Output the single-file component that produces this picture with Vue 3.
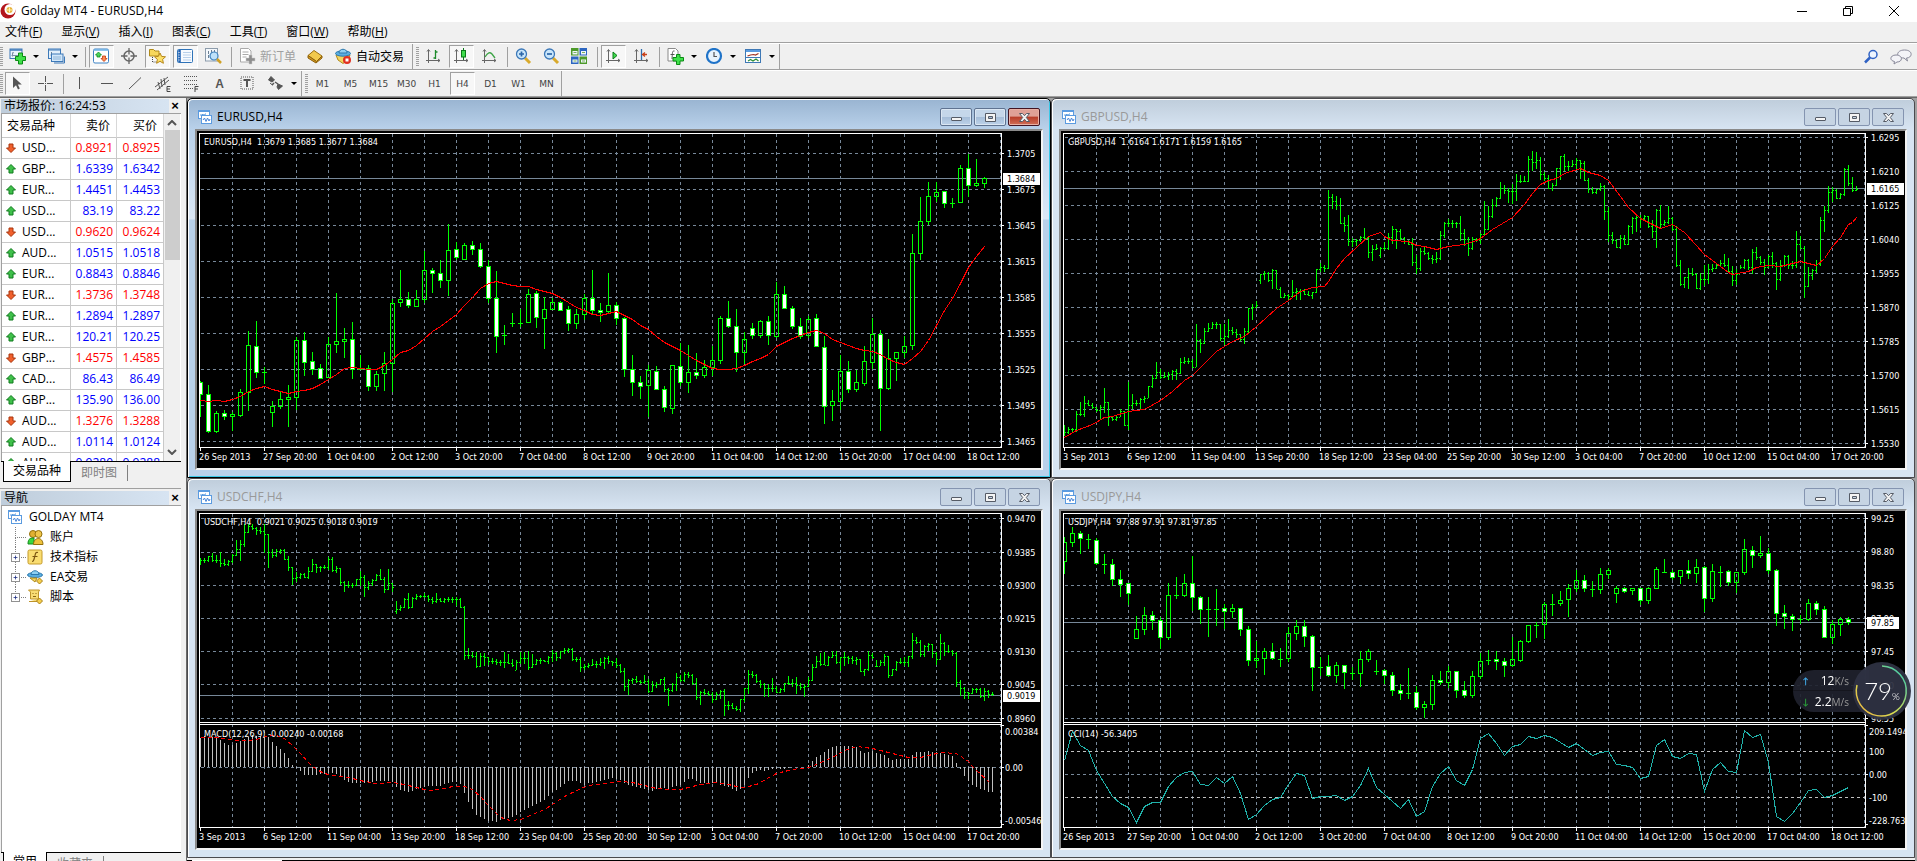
<script setup>
import { ref } from 'vue'

const menus = [
  ['文件', 'F'],
  ['显示', 'V'],
  ['插入', 'I'],
  ['图表', 'C'],
  ['工具', 'T'],
  ['窗口', 'W'],
  ['帮助', 'H']
]

const icons = {
  chartWin:
    '<rect x="1.5" y="1.5" width="11" height="8" fill="#fff" stroke="#5b9be0"/><path d="M1 2h12" stroke="#5b9be0" stroke-width="2"/><path d="M3 6h2l1-1 1 2 1-2h1" fill="none" stroke="#5b9be0"/><rect x="4.500" y="6.500" width="10" height="8" fill="#fff" stroke="#5b9be0"/><path d="M6 11l1.500-2 1.500 3.500 1.500-3.500 1.500 3 1-2" fill="none" stroke="#4a86d8"/>',
  newChart:
    '<rect x="1" y="1" width="12" height="9.500" fill="#eaf4fd" stroke="#3d79b8"/><path d="M1 2h12" stroke="#3d79b8" stroke-width="1.500"/><path d="M3.500 4.500v4M2.500 7.500h7M3 5.500l2-1" stroke="#7b8fa5" fill="none"/><path d="M9.500 5h4v3.500h3v4h-3V16h-4v-3.500h-3v-4h3z" fill="#3fe04a" stroke="#0a8a14"/>',
  windows:
    '<rect x=".5" y="1" width="12" height="9.500" fill="#e3f0fb" stroke="#3d79b8"/><path d="M.5 2h12" stroke="#3d79b8"/><path d="M3.500 4v4M2.500 7h7" stroke="#6f8396"/><rect x="3.500" y="6" width="11.500" height="7.500" fill="#d3e8fa" stroke="#3d79b8"/><path d="M5 9h8M5 11h8" stroke="#8fb4d6"/><path d="M6 15h10.500V8.500" fill="none" stroke="#3d79b8"/>',
  market:
    '<rect x=".5" y="1" width="15" height="14" rx="1.500" fill="#fff" stroke="#3e83c4"/><path d="M1 2h14" stroke="#6bb0e6" stroke-width="1.500"/><path d="M5.500 4l3 3h-1.500v2h-3V7H2.500z" fill="#4bd45a" stroke="#138a24" stroke-width=".8"/><path d="M11 13.500l-3-3h1.500v-2.500h3v2.500H14z" fill="#ff8a50" stroke="#c0390c" stroke-width=".8"/>',
  cross:
    '<circle cx="8" cy="8" r="5" fill="none" stroke="#666" stroke-width="1.500"/><path d="M8 0v6.500M8 9.500V16M0 8h6.500M9.500 8H16" stroke="#666" stroke-width="1.300"/>',
  navStar:
    '<path d="M.5 3V1.500h4l1.500 1.500h4V8H.5z" fill="#f7d75c" stroke="#b08a1a"/><path d="M3.500 9v5h4" fill="none" stroke="#444" stroke-dasharray="1 1"/><path d="M11 5l1.600 3.400 3.900.4-2.900 2.600.8 3.900L11 13.300l-3.400 2 .8-3.900-2.900-2.600 3.900-.4z" fill="#fce06a" stroke="#b5861a"/>',
  terminal:
    '<rect x=".5" y="1.500" width="15" height="13" rx="1" fill="#f8fbff" stroke="#2f73b8"/><path d="M2.500 2v12" stroke="#1e5fb0" stroke-width="2.500"/><path d="M2 4v9" stroke="#fff" stroke-dasharray="1 1.500"/><path d="M6 4.500h8M6 7h8M6 9.500h8M6 12h8" stroke="#b9d0ea"/>',
  tester:
    '<rect x=".5" y=".5" width="12" height="12.500" fill="#f4f8fc" stroke="#8d9cab"/><path d="M3.500 3v8M6.500 2v7M9.500 2v5" stroke="#6c7f92" stroke-dasharray="3 1"/><circle cx="9" cy="8" r="4" fill="#bfe2fa" stroke="#3f82bd" stroke-width="1.200"/><path d="M12 11l4 4" stroke="#d0a126" stroke-width="2.500"/>',
  order:
    '<path d="M1.500.5h8l2.500 2.500v11H1.500z" fill="#fff" stroke="#a9a9a9"/><path d="M3.500 4h6M3.500 6.500h6M3.500 9h4" stroke="#a9a9a9"/><path d="M10 7h3v3h3v3h-3v3h-3v-3H7v-3h3z" fill="#8e8e8e" stroke="#c8c8c8" stroke-width=".5"/>',
  book:
    '<path d="M1 7.500L7 2.500l8 5.500-5.500 5.500z" fill="#f2c94c" stroke="#9c6f10"/><path d="M1 7.500v2.500l8 5 6-5V8l-5.500 5.500z" fill="#d79a1f" stroke="#8b5f0a"/>',
  auto:
    '<path d="M1 7l2 5 5 3.500 5-3.500 2-5z" fill="#f3d45e" stroke="#b08a1c"/><ellipse cx="8" cy="5.500" rx="7.500" ry="2.700" fill="#5aaee0" stroke="#2c78ad"/><path d="M4 5c0-5 8-5 8 0z" fill="#8fd0f2" stroke="#2c78ad"/><circle cx="12" cy="12" r="4" fill="#e03020"/><rect x="10.500" y="10.500" width="3" height="3" fill="#fff"/>',
  bars: '<path d="M3.500 2v13M1 12.500h14M2 3.500l1.500-2 1.500 2M13 11l2 1.500-2 1.500" fill="none" stroke="#666"/><path d="M10.500 2v9M8.500 10h2M10.500 4h2" stroke="#1d8a2a" stroke-width="1.300"/>',
  candles:
    '<path d="M3.500 2v13M1 12.500h14M2 3.500l1.500-2 1.500 2M13 11l2 1.500-2 1.500" fill="none" stroke="#666"/><path d="M10.500 0v12" stroke="#0a7a18"/><rect x="8.500" y="2.500" width="4" height="6.500" fill="#3fdc4c" stroke="#0a7a18"/>',
  line: '<path d="M3.500 2v13M1 12.500h14M2 3.500l1.500-2 1.500 2M13 11l2 1.500-2 1.500" fill="none" stroke="#666"/><path d="M4 9c3-5 5-5 7-3l3 4" fill="none" stroke="#3da446" stroke-width="1.300"/>',
  zoomIn:
    '<path d="M10 10l5 5" stroke="#d9aa2c" stroke-width="3"/><circle cx="6.500" cy="6" r="5" fill="#c9e6fb" stroke="#3c78b8" stroke-width="1.300"/><path d="M6.500 3.500v5M4 6h5" stroke="#2b66a8" stroke-width="1.700"/>',
  zoomOut:
    '<path d="M10 10l5 5" stroke="#d9aa2c" stroke-width="3"/><circle cx="6.500" cy="6" r="5" fill="#c9e6fb" stroke="#3c78b8" stroke-width="1.300"/><path d="M4 6h5" stroke="#2b66a8" stroke-width="1.700"/>',
  tile: '<path d="M0 0h7.500v7.500H0zM8.500 8.500H16V16H8.500z" fill="#4d9a2a"/><path d="M8.500 0H16v7.500H8.500zM0 8.500h7.500V16H0z" fill="#2c66c0"/><path d="M1.500 3h5v3.500h-5zM10 3h5v3.500h-5zM1.500 11.500h5v3h-5zM10 11.500h5v3h-5z" fill="#eef4fb"/><path d="M2.500 4.500h3M11 4.500h3M2.500 13h3M11 13h3" stroke="#7bb05c"/>',
  scroll:
    '<path d="M3.500 2v13M1 12.500h14M2 3.500l1.500-2 1.500 2M13 11l2 1.500-2 1.500" fill="none" stroke="#666"/><path d="M8 4l4 3.500L8 11z" fill="#3fdc4c" stroke="#0a7a18"/>',
  shift:
    '<path d="M3.500 2v13M1 12.500h14M2 3.500l1.500-2 1.500 2M13 11l2 1.500-2 1.500" fill="none" stroke="#666"/><path d="M8.500 1v11" stroke="#2c6cae" stroke-width="1.300"/><path d="M14 6.500H9.500M12 4.500l-2.500 2 2.500 2" fill="none" stroke="#c8401a" stroke-width="1.300"/>',
  indicator:
    '<path d="M1 .5h7.500l2.500 2.500v10H1z" fill="#fff" stroke="#8a8a8a"/><path d="M7.500 3C5 2.500 5.500 5 5 11M3.500 6.500h4" fill="none" stroke="#555"/><path d="M9.500 6.500h3.500v3h3.500v3.500H13v3.500H9.500V13H6V9.500h3.500z" fill="#3fe04a" stroke="#0a8a14"/>',
  clock:
    '<circle cx="8" cy="8" r="7" fill="#e8f3fd" stroke="#1f73c8" stroke-width="2.200"/><path d="M8 4v4.500h3" fill="none" stroke="#555" stroke-width="1.200"/>',
  template:
    '<rect x=".5" y="1.500" width="15" height="13" fill="#fff" stroke="#3e78b5"/><path d="M1 3h14" stroke="#5a9be0" stroke-width="2"/><path d="M2.500 8l3-1 3-.5 2 .5 3-1.500" fill="none" stroke="#a03020" stroke-width="1.200"/><path d="M1 9.500h14" stroke="#3e78b5"/><path d="M3 13l2.500-1.500L8 13l3-2 2.500 2" fill="none" stroke="#2f8f38" stroke-width="1.200"/>',
  cursor: '<path d="M4 1.500v11.500l3-2.800 2 4.300 1.800-.9-2-4.200h4z" fill="#555"/>',
  crosshair: '<path d="M8.500 1v6M8.500 10v6M1 8.500h6M10 8.500h6M8 8.500h1" stroke="#555"/>',
  vline: '<path d="M8.500 2v12" stroke="#555"/>',
  hline: '<path d="M2 8.500h12" stroke="#555"/>',
  trend: '<path d="M2 14L14 2.500" stroke="#555"/>',
  channel:
    '<path d="M0 12L13 2M2 15L14 5M3 7l2 7M6 4l1 8M9 3l1 7" stroke="#555" fill="none"/><path d="M15.500 11.500H12v5h3.500M12 14h3" fill="none" stroke="#444"/>',
  fibo: '<path d="M1 1.500h14M1 5.500h14M1 9.500h14M1 13.500h9" stroke="#555" stroke-dasharray="1 1"/><path d="M15.500 11.500H12V17M12 14h3" fill="none" stroke="#444"/>',
  label: '<rect x="2" y="2" width="12" height="12" fill="none" stroke="#555" stroke-dasharray="1 1"/><path d="M4.500 5h7M8 5v7" stroke="#555" stroke-width="2"/>',
  arrows:
    '<path d="M4 1.500L7.500 5 5 7 1.500 5zM3 8l2.500 2M11 9l4.500 2-4 3.500-1.500-2.500z" fill="#555" stroke="#555"/><path d="M5 10l2-2M8 7l3 2" stroke="#555" stroke-width="1.500"/>',
  account:
    '<circle cx="6" cy="5" r="3.500" fill="#e0b032" stroke="#94700c"/><circle cx="11.500" cy="5" r="3.500" fill="#f0c64a" stroke="#94700c"/><path d="M1 15c0-6 3-6 6-6v6z" fill="#39d83e" stroke="#168a1e"/><path d="M6.500 15.500c0-8 9.500-8 9.500 0z" fill="#eec23c" stroke="#94700c"/>',
  func: '<rect x="1" y="1" width="14" height="14" rx="1.500" fill="#f9dd72" stroke="#c49a2a"/><path d="M11 3.500c-3-1-2.500 2-3.500 5s-.5 4-2.500 4M5.500 7.500h5" fill="none" stroke="#7a5410" stroke-width="1.200"/>',
  ea: '<ellipse cx="8" cy="6" rx="7.500" ry="2.500" fill="#5aaee0" stroke="#2c78ad"/><path d="M4 5.500c0-5 8-5 8 0z" fill="#8fd0f2" stroke="#2c78ad"/><path d="M3 9h7l-2 4z" fill="#f3d45e" stroke="#b08a1c"/><path d="M12.500 9l3 3-3 3-3-3z" fill="#f6cf4b" stroke="#a8801a"/>',
  script:
    '<path d="M1.500 1h11l-1 2v7H3.500V3zM2 12.500h8l1-2.500" fill="#f8dc74" stroke="#bd932a"/><path d="M5.500 4.500h1M8.500 4.500h1M6 7.500h3" stroke="#8a6512"/><path d="M12.500 9l3 3-3 3-3-3z" fill="#f6cf4b" stroke="#a8801a"/>'
}

const mainTools = [
  { icon: 'newChart', menu: true },
  { icon: 'windows', menu: true },
  { sep: true },
  { icon: 'market', on: true },
  { icon: 'cross' },
  { icon: 'navStar', on: true },
  { icon: 'terminal', on: true },
  { icon: 'tester' },
  { sep: true },
  { icon: 'order', text: '新订单', off: true },
  { icon: 'book' },
  { icon: 'auto', text: '自动交易' }
]

const chartTools = [
  { icon: 'bars' },
  { icon: 'candles', on: true },
  { icon: 'line' },
  { sep: true },
  { icon: 'zoomIn' },
  { icon: 'zoomOut' },
  { icon: 'tile' },
  { sep: true },
  { icon: 'scroll', on: true },
  { icon: 'shift' },
  { sep: true },
  { icon: 'indicator', menu: true },
  { icon: 'clock', menu: true },
  { icon: 'template', menu: true }
]

const drawTools = [
  { icon: 'cursor', on: true },
  { icon: 'crosshair' },
  { sep: true },
  { icon: 'vline' },
  { icon: 'hline' },
  { icon: 'trend' },
  { icon: 'channel' },
  { icon: 'fibo' },
  { letter: 'A' },
  { icon: 'label' },
  { icon: 'arrows', menu: true }
]

const periods = ['M1', 'M5', 'M15', 'M30', 'H1', 'H4', 'D1', 'W1', 'MN']
const period = ref('H4')

const quotes = [
  ['USD...', '0.8921', '0.8925', 'down'],
  ['GBP...', '1.6339', '1.6342', 'up'],
  ['EUR...', '1.4451', '1.4453', 'up'],
  ['USD...', '83.19', '83.22', 'up'],
  ['USD...', '0.9620', '0.9624', 'down'],
  ['AUD...', '1.0515', '1.0518', 'up'],
  ['EUR...', '0.8843', '0.8846', 'up'],
  ['EUR...', '1.3736', '1.3748', 'down'],
  ['EUR...', '1.2894', '1.2897', 'up'],
  ['EUR...', '120.21', '120.25', 'up'],
  ['GBP...', '1.4575', '1.4585', 'down'],
  ['CAD...', '86.43', '86.49', 'up'],
  ['GBP...', '135.90', '136.00', 'up'],
  ['AUD...', '1.3276', '1.3288', 'down'],
  ['AUD...', '1.0114', '1.0124', 'up'],
  ['AUD...', '0.9280', '0.9288', 'up']
]

const tree = [
  { icon: 'account', text: '账户' },
  { icon: 'func', text: '技术指标', open: true },
  { icon: 'ea', text: 'EA交易', open: true },
  { icon: 'script', text: '脚本', open: true }
]

// Vertical values are stored in thirds of a pixel
const TOP = 117
const row = (v) => Math.round((v - TOP - 1.5) / 3)
const edge = (v) => Math.round((v - TOP) / 3)
const parse = (s) => s.trim().split(/\s*,\s*/).map((p) => p.split(' '))

// high, body top, body bottom, low, f = falling / h = rising / d = doji
function candlePaths(src) {
  let wick = ''
  let hollow = ''
  let solid = ''
  parse(src).forEach(([hi, top, bot, lo, kind], i) => {
    const x = i * 8
    const t = row(top)
    const b = Math.max(row(bot), t)
    if (kind === 'd') {
      wick += `M${x + 0.5} ${edge(hi)}V${edge(lo)}M${x - 2} ${b + 0.5}h5`
      return
    }
    wick += `M${x + 0.5} ${edge(hi)}V${t}M${x + 0.5} ${b + 1}V${Math.max(edge(lo), b + 1)}`
    const box = `M${x - 1.5} ${t + 0.5}h4V${b + 0.5}h-4z`
    if (kind === 'f') solid += box
    else hollow += box
  })
  return { wick: wick + hollow, solid }
}

// high, low, close and, after a gap, open
function barPaths(src) {
  let wick = ''
  let last = null
  parse(src).forEach(([hi, lo, close, open], i) => {
    const x = i * 4
    const o = row(open || last || close)
    wick += `M${x + 0.5} ${edge(hi)}V${edge(lo)}M${x - 1} ${o + 0.5}h1M${x + 1} ${row(close) + 0.5}h1`
    last = close
  })
  return { wick, solid: '' }
}

const poly = (src, step) =>
  parse(src)
    .map(([i, y]) => `${i * step + 0.5},${row(y) + 0.5}`)
    .join(' ')
const polyAll = (src, step) =>
  src
    .trim()
    .split(' ')
    .map((y, i) => `${i * step + 0.5},${row(y) + 0.5}`)
    .join(' ')

function histogram(src, zero) {
  const pts = parse(src).map((p) => p.map(Number))
  let d = ''
  for (let k = 0; k < pts.length; k++) {
    const [i0, y0] = pts[k]
    const [i1, y1] = pts[k + 1] || [i0 + 1, y0]
    for (let i = i0; i < i1; i++) {
      const y = y0 + ((y1 - y0) * (i - i0)) / (i1 - i0)
      d += `M${i * 4 + 0.5} ${row(zero)}V${row(y)}`
    }
  }
  return d
}

const eurusd = `857 862 898 965 f,870 898 1010 1013 f,948 955 1010 1013 h,945 955 964 974 f,950 958 965 1008 h,882 892 962 965 h,708 751 892 948 h,678 754 832 849 f,816 831 832 866 d,919 934 953 996 h,
888 912 935 941 h,870 907 913 996 h,726 736 907 946 h,711 736 802 843 f,771 799 823 840 f,808 820 849 851 f,726 748 848 850 h,594 739 748 773 h,699 733 739 790 h,681 733 822 851 f,
780 820 823 826 d,811 820 874 887 f,828 838 874 887 h,771 805 835 887 h,612 625 805 891 h,525 613 622 635 h,591 613 631 638 f,585 613 634 636 h,468 526 613 625 h,519 526 535 594 f,
495 535 556 578 f,387 466 556 603 h,441 463 487 496 f,444 451 493 495 h,438 451 463 480 f,444 463 514 519 f,495 514 610 625 f,528 610 724 774 f,690 720 722 750 d,654 682 685 696 d,
642 682 685 696 d,583 598 682 684 h,588 595 667 699 f,607 643 670 762 h,610 622 643 645 h,619 622 646 648 f,633 643 685 708 f,642 658 685 702 h,598 610 658 675 h,525 610 646 657 f,
625 646 652 681 f,534 631 649 658 h,622 631 670 690 f,665 670 823 845 f,780 823 862 903 f,843 862 874 912 f,810 826 871 966 h,813 829 883 886 f,873 883 937 951 f,810 811 940 957 h,
744 814 862 873 f,750 832 862 894 h,774 832 841 852 f,795 817 841 849 h,753 796 817 843 h,663 670 796 807 h,618 670 694 699 f,642 694 772 831 f,711 733 772 807 h,684 700 721 731 f,
675 679 721 728 h,663 679 721 750 f,561 598 724 728 h,573 598 640 641 f,633 640 694 701 f,670 694 724 731 f,663 673 721 728 h,657 670 754 756 f,723 757 934 987 f,885 919 931 978 h,
780 829 919 945 h,798 829 883 893 f,825 862 883 891 h,754 799 865 872 h,669 718 802 822 h,706 718 880 1008 f,732 790 880 884 h,771 772 790 858 h,723 754 772 788 h,417 475 751 765 h,
306 379 475 495 h,261 304 379 390 h,261 292 304 321 h,288 289 325 339 f,309 322 325 339 d,210 220 322 324 h,177 220 271 306 f,192 265 271 275 h,246 251 265 279 h`

const eurusdMa =
  '916 918 916 919 912 905 888 880 875 883 888 895 889 885 880 868 854 838 821 817 821 823 823 812 793 773 765 750 730 709 693 676 658 631 606 580 566 559 565 571 574 574 583 589 595 607 622 636 646 658 661 655 648 660 673 690 703 723 742 754 766 781 795 808 820 823 823 820 811 800 790 778 753 742 730 721 711 706 715 733 742 751 760 765 769 778 793 802 807 791 769 736 691 646 609 565 518 484 454'

const gbpusd = `990 1023 1013,997 1017 1003,998 1010 1003,948 1010 958,921 963 958,903 966 925,915 933 931,924 942 938,935 950 945,930 971 937,879 954 922,922 992 966,963 978 973,960 978 966,942 966 948,
948 992 990,861 1004 930,897 943 925,915 932 925,908 944 912,903 924 910,873 910 875,840 880 850,801 853 832,822 852 846,831 850 845,831 856 837,825 855 829,822 856 836,788 838 802,
786 806 799,790 806 799,792 819 816,687 816 737,733 773 744,699 748 709,684 712 699,681 703 688,681 703 688,688 738 731,687 750 724,672 729 706,696 720 712,702 728 718,717 738 732,
700 748 709,640 718 640,627 675 637,618 640 631,538 566 538 557,528 556 534,532 560 556,522 581 526,525 583 583,577 608 606,595 608 601,597 614 605,555 608 592,580 616 588,583 614 588,
583 599 598,588 604 600,592 611 592,522 593 522,504 532 516,510 530 520,285 522 306,297 342 318,303 345 330,309 388 385,366 411 391,360 452 439,430 456 440,432 454 436,424 440 427,
399 434 430,426 490 472,450 497 463,448 466 460,456 490 459 482,442 465 460,414 465 427,393 447 403,402 462 409,402 434 430,427 446 438,434 450 448,430 512 502,480 536 520,460 527 470,
456 480 476,472 496 490,480 506 493,472 503 490,408 494 420,382 428 385,372 396 385,376 398 384,380 400 385,363 437 415,402 454 432,427 482 460,427 464 433,430 440 436,414 446 418,
318 424 403,333 406 364,312 370 331,305 335 309,261 313 279,270 297 285,279 324 288,267 327 288,237 319 259,240 265 259,243 262 259,183 261 192,168 227 202,171 223 197,185 255 238,
231 258 249,240 282 279,264 288 270,218 273 221,183 255 183,177 229 215,199 229 213,195 217 208,189 225 197,195 252 205,199 259 255,249 295 282,277 297 293,282 297 283,264 289 274,
271 375 348,336 441 421,411 447 436,432 459 457,420 462 430,421 451 448,390 451 395,366 417 369,360 411 367,360 399 370,360 375 365,363 399 394,375 429 409,343 459 346,330 403 388,
375 393 382,333 387 370,366 409 403,393 517 511,495 573 568,546 579 547,519 582 535,519 543 538,535 583 580,534 585 553,510 573 553,507 567 523,507 532 519,504 523 511,496 513 504,
477 517 511,489 532 528,513 573 556,522 571 537,510 523 517,493 523 495,493 525 517,462 537 472,456 495 486,483 509 502,492 539 517,481 519 484,471 519 505,502 585 553,495 559 511,
480 517 484,481 521 511,499 521 511,408 519 447,423 462 459,453 609 573,516 575 541,522 555 526,495 535 507,366 513 375,333 411 346,273 355 291,276 321 286,283 313 309,295 311 298,
220 303 222,210 273 265,246 291 285,273 289 283`

const gbpusdMa = `0 1027,3 1006,7 989,10 968,12 964,16 948,20 943,24 917,27 889,30 857,32 841,35 804,38 770,42 739,45 724,48 693,53 640,56 616,59 589,62 578,65 574,66 558,68 520,70 489,73 457,76 424,79 411,80 424,82 436,86 439,
88 451,90 455,93 463,96 454,100 448,103 436,104 431,107 403,112 367,115 328,117 295,119 268,121 256,123 250,125 235,129 220,131 231,134 241,136 255,139 304,141 337,144 371,149 400,152 387,155 412,158 452,160 478,163 504,
166 533,167 538,171 529,173 517,176 511,179 514,184 499,188 511,190 489,192 454,194 426,196 388,197 381,198 367`

const usdchf = `250 270 256,250 265 255,244 260 244,234 262 256,240 264 256,232 276 264,252 272 268,255 272 260,238 265 241,195 244 222,195 258 208,148 215 172,148 174 154,148 165 160,155 180 165,
156 178 170,148 234 178,178 279 232,222 250 240,222 246 230,222 238 226,222 255 253,243 288 276,276 330 310,292 320 306,294 312 298,294 310 306,276 312 290,252 292 268,266 294 276,
272 290 276,270 282 278,246 284 252,246 292 286,273 294 281,279 330 322,318 350 330,318 340 332,324 340 331,312 334 313,288 334 306,300 366 338,318 346 326,312 334 316,297 318 300,
282 316 314,306 354 342,282 344 325,324 350 338,378 416 402 408,390 408 398,370 400 373,354 402 397,366 400 370,357 374 365,360 370 364,354 370 363,360 382 374,366 388 379,354 385 374,
370 382 378,370 385 374,366 380 373,366 384 374,366 392 374,369 400 396,393 555 542,520 552 542,531 550 544,532 578 573,534 576 544,534 574 548,546 570 560,549 566 560,552 570 562,
555 572 562,531 580 563,536 568 564,552 576 572,554 586 561 585,531 568 549,531 566 549,528 584 576,537 580 567,552 570 555,549 566 557,554 562 558,543 566 546,525 562 534,530 557 546,
528 552 529,520 536 525,519 534 523,520 558 552,546 562 552,546 591 576,567 585 573,564 580 570,552 574 567,558 578 567,549 573 562,545 582 549,543 567 560,558 574 563,550 578 572,
567 594 590,580 648 634,612 660 616,609 626 614,603 624 620,616 628 622,600 626 620,612 654 650,618 652 630,622 638 628,612 630 614,606 652 643,640 693 646,624 652 628,594 648 608,
600 622 616,592 620 598,591 608 602,597 630 624,609 675 668,648 690 652,642 660 654,648 663 657,652 684 673,651 675 658,645 672 650,642 723 690,679 706 691,684 702 700,694 708 703,
673 711 673,640 680 640,585 656 598,588 608 601,597 624 620,615 638 627,625 666 640,628 666 640,609 650 640,634 654 651,640 654 643,624 650 625,603 630 625,612 636 626,606 656 631,
624 645 636,628 666 634,606 636 616,567 618 577,543 580 559,534 574 568,531 570 570,543 573 546,528 550 540,528 566 562,545 588 548,531 573 548,543 567 549,543 567 556,546 570 553,
552 591 588,582 603 583,528 588 541,534 553 548,555 576 573 573,555 573 562,538 573 544,543 608 601,583 604 583,558 588 562,549 568 562,546 573 562,543 576 544,474 552 496,486 506 502,
495 546 538,510 545 513,505 528 508,507 550 534,530 570 552,477 556 505,501 544 528,510 534 528,525 544 534,531 636 622,615 664 640,636 672 652,652 672 655,640 658 643,640 654 643,
640 670 664,639 678 650,646 670 658,652 664 658`

const macd = `0 790,1 785,4 790,5 797,6 805,7 810,8 810,9 804,10 800,11 793,12 788,13 782,16 785,17 787,18 802,19 814,20 823,21 834,22 850,23 871,24 880,25 890,26 900,27 902,29 902,30 899,33 895,34 897,35 905,36 915,37 921,38 926,
42 926,44 918,47 918,48 922,49 936,50 945,52 953,53 948,55 939,56 936,60 934,62 925,64 922,65 928,66 955,67 983,68 1002,69 1020,70 1028,72 1040,74 1041,76 1033,78 1027,79 1020,80 1012,82 1000,83 995,85 982,86 975,88 953,
90 938,92 920,94 920,95 924,96 932,97 926,99 923,101 915,103 911,105 917,106 926,108 935,110 940,113 948,115 940,117 942,119 935,120 930,122 912,123 912,125 924,127 927,129 926,131 934,133 942,134 948,135 942,136 930,
137 911,138 896,139 888,140 885,141 888,142 885,144 883,146 884,148 878,151 878,152 872,153 860,154 846,155 840,157 824,158 817,160 813,162 813,164 817,165 829,166 834,168 830,170 839,171 840,172 849,173 855,177 853,
178 840,179 831,181 831,182 828,183 831,185 835,188 843,189 865,190 884,191 905,192 920,193 930,195 944,197 951,198 953`

const macdSignal = `0 787,3 786,6 790,9 795,12 797,14 792,17 782,19 782,21 790,23 810,25 835,27 862,29 882,31 895,33 900,37 906,39 912,41 918,44 925,48 922,51 929,54 938,57 946,60 943,63 933,66 934,68 943,70 965,72 990,74 1015,
76 1032,78 1036,80 1034,83 1018,86 1002,88 987,91 965,94 945,97 931,101 924,105 919,108 922,111 931,114 940,118 942,120 943,124 930,128 922,131 926,134 935,136 936,139 929,144 895,148 884,152 878,157 853,161 825,164 815,
168 820,173 835,177 847,180 847,185 833,189 836,192 860,193 875,198 930`

const usdjpy = `185 203 260 297 h,156 175 203 216 h,168 175 191 237 f,177 190 193 222 d,190 196 266 270 f,238 265 268 297 d,252 268 314 333 f,285 313 329 366 f,324 325 355 390 f,424 463 490 491 h,
396 421 463 480 h,409 421 436 465 f,426 436 487 522 f,324 361 487 494 h,306 360 362 372 d,297 325 361 366 h,244 325 367 408 f,363 367 403 447 f,366 402 404 486 d,342 400 403 453 d,
387 400 409 462 f,387 400 409 429 h,399 400 463 483 f,454 463 556 573 f,498 550 556 579 h,519 529 550 600 h,504 529 550 556 f,519 549 553 576 d,456 475 550 560 h,435 454 475 495 h,
435 454 484 516 f,480 484 577 648 f,546 574 577 603 d,540 574 601 606 f,561 571 601 624 h,570 571 592 642 f,576 592 595 615 d,528 553 596 636 h,521 529 553 561 h,555 586 589 600 d,
582 586 601 627 f,591 601 646 663 f,627 646 655 675 f,579 652 655 672 d,633 652 697 704 f,678 688 697 729 h,600 616 688 705 h,588 616 622 630 f,573 589 622 639 h,588 589 646 669 f,
618 646 661 668 f,588 604 661 669 h,533 559 604 612 h,525 553 556 571 d,528 553 559 585 f,549 559 571 606 f,486 553 571 576 h,495 499 556 560 h,450 451 499 503 h,441 448 451 489 d,
381 388 448 492 h,357 385 388 423 d,348 376 385 393 h,327 340 373 426 h,285 316 340 350 h,300 316 340 350 f,318 340 343 366 d,279 298 343 357 h,279 286 298 312 h,333 340 355 384 h,
337 340 349 354 f,339 340 346 360 h,339 340 376 390 f,336 340 376 387 h,276 283 340 342 h,252 289 292 294 d,286 292 307 315 f,285 286 304 327 h,255 286 295 312 f,252 277 295 324 h,
274 277 370 411 f,267 289 370 381 h,273 289 291 336 d,285 289 322 333 f,291 292 322 354 h,192 223 292 300 h,212 226 241 279 f,183 235 241 250 h,219 235 286 297 f,282 286 415 453 f,
390 415 424 462 f,417 424 433 468 f,421 431 434 447 d,373 385 433 438 h,379 385 403 420 f,394 403 487 489 f,435 448 487 507 h,426 433 448 483 h,426 433 442 450 f`

const cci =
  '855 770 811 826 887 925 963 985 996 1042 993 982 982 935 907 892 889 927 931 907 924 905 955 1032 1019 992 973 967 928 895 902 969 964 964 960 975 963 930 880 937 957 980 1000 974 1023 1010 933 895 875 916 931 882 790 775 804 841 814 807 783 790 781 787 802 817 804 824 841 832 829 867 871 877 911 903 812 793 844 850 835 838 949 884 862 888 892 766 787 778 862 1025 1039 1014 982 946 943 967 961 948 936'

const octDates = ['26 Sep 2013', '27 Sep 20:00', '1 Oct 04:00', '2 Oct 12:00', '3 Oct 20:00', '7 Oct 04:00', '8 Oct 12:00', '9 Oct 20:00', '11 Oct 04:00', '14 Oct 12:00', '15 Oct 20:00', '17 Oct 04:00', '18 Oct 12:00']
const sepDates = ['3 Sep 2013', '6 Sep 12:00', '11 Sep 04:00', '13 Sep 20:00', '18 Sep 12:00', '23 Sep 04:00', '25 Sep 20:00', '30 Sep 12:00', '3 Oct 04:00', '7 Oct 20:00', '10 Oct 12:00', '15 Oct 04:00', '17 Oct 20:00']

const scale = (labels, rows) => labels.map((text, i) => ({ text, y: row(rows[i]) }))

const charts = [
  {
    title: 'EURUSD,H4',
    active: true,
    info: 'EURUSD,H4  1.3679 1.3685 1.3677 1.3684',
    ...candlePaths(eurusd),
    ma: polyAll(eurusdMa, 8),
    dates: octDates,
    last: { text: '1.3684', y: row(250), width: 36 },
    scale: scale(
      ['1.3705', '1.3675', '1.3645', '1.3615', '1.3585', '1.3555', '1.3525', '1.3495', '1.3465'],
      [175, 283, 391, 499, 607, 715, 823, 931, 1039]
    )
  },
  {
    title: 'GBPUSD,H4',
    info: 'GBPUSD,H4  1.6164 1.6171 1.6159 1.6165',
    ...barPaths(gbpusd),
    ma: poly(gbpusdMa, 4),
    dates: sepDates,
    last: { text: '1.6165', y: row(281), width: 36 },
    scale: scale(
      ['1.6295', '1.6210', '1.6125', '1.6040', '1.5955', '1.5870', '1.5785', '1.5700', '1.5615', '1.5530'],
      [128, 230, 332, 434, 536, 637, 739, 841, 943, 1045]
    )
  },
  {
    title: 'USDCHF,H4',
    info: 'USDCHF,H4  0.9021 0.9025 0.9018 0.9019',
    ...barPaths(usdchf),
    dates: sepDates,
    last: { text: '0.9019', y: row(661), width: 36 },
    scale: scale(
      ['0.9470', '0.9385', '0.9300', '0.9215', '0.9130', '0.9045', '0.8960'],
      [130, 232, 331, 430, 529, 628, 730]
    ),
    sub: {
      info: 'MACD(12,26,9) -0.00240 -0.00168',
      hist: histogram(macd, 877),
      signal: poly(macdSignal, 4),
      zero: row(877),
      levels: [],
      scale: scale(['0.00384', '0.00', '-0.00546'], [769, 877, 1036])
    }
  },
  {
    title: 'USDJPY,H4',
    info: 'USDJPY,H4  97.88 97.91 97.81 97.85',
    ...candlePaths(usdjpy),
    dates: octDates,
    last: { text: '97.85', y: row(442), width: 31 },
    scale: scale(
      ['99.25', '98.80', '98.35', '97.90', '97.45', '97.00', '96.55'],
      [130, 230, 331, 430, 529, 631, 730]
    ),
    sub: {
      info: 'CCI(14) -56.3405',
      line: polyAll(cci, 8),
      zero: row(898),
      levels: [row(829), row(967)],
      scale: scale(['209.1494', '100', '0.00', '-100', '-228.7632'], [769, 829, 898, 967, 1036])
    }
  }
]
</script>

<template>
  <div class="app">
    <header class="titlebar">
      <svg class="logo" viewBox="0 0 16 16">
        <circle cx="8" cy="8" r="7.500" fill="#b3161c" />
        <circle cx="10" cy="6.500" r="5.500" fill="#fff" />
        <circle cx="9.500" cy="7" r="3" fill="#e8b23a" />
        <path d="M7 7h5M9.500 4.500v5" stroke="#fff3b0" />
      </svg>
      <h1>Golday MT4 - EURUSD,H4</h1>
      <button class="sys" aria-label="Minimize"><svg viewBox="0 0 10 10"><path d="M0 5.500h10" /></svg></button>
      <button class="sys" aria-label="Restore">
        <svg viewBox="0 0 10 10"><path d="M.5 2.500h7v7h-7zM2.500 2.500v-2h7v7h-2" /></svg>
      </button>
      <button class="sys" aria-label="Close"><svg viewBox="0 0 10 10"><path d="M0 0l10 10M10 0L0 10" /></svg></button>
    </header>

    <nav class="menubar">
      <button v-for="[name, key] in menus" :key="key">{{ name }}(<u>{{ key }}</u>)</button>
    </nav>

    <div class="toolrow">
      <div v-for="(group, g) in [mainTools, chartTools]" :key="g" class="toolbar">
        <i class="grip"></i>
        <template v-for="(t, i) in group" :key="i">
          <i v-if="t.sep" class="sep"></i>
          <button v-else :class="['tool', { on: t.on, off: t.off, wide: t.text }]" :disabled="t.off" :aria-label="t.icon">
            <span class="face"><svg viewBox="0 0 17 17" v-html="icons[t.icon]"></svg></span>
            <span v-if="t.text" class="caption">{{ t.text }}</span>
          </button>
          <button v-if="t.menu" class="drop" aria-label="more"></button>
        </template>
      </div>
      <div class="extras">
        <button aria-label="Search">
          <svg viewBox="0 0 22 16" width="22" height="16">
            <circle cx="13" cy="5.500" r="4" fill="#eef5ff" stroke="#2f62c4" stroke-width="1.500" />
            <path d="M10 8.500l-5 5" stroke="#2f62c4" stroke-width="2.500" />
          </svg>
        </button>
        <button aria-label="Chat">
          <svg viewBox="0 0 22 16" width="22" height="16">
            <path d="M14.500 1c9 0 8 8 2 8l1 3-3.500-3C5 9 6 1 14.500 1z" fill="#f4f4f8" stroke="#889" />
            <path d="M6 6c7 0 7 7 1 7l-3 2 .5-2.500C-1 11.500 0 6 6 6z" fill="#f4f4f8" stroke="#889" />
          </svg>
        </button>
      </div>
    </div>

    <div class="toolrow">
      <div class="toolbar">
        <i class="grip"></i>
        <template v-for="(t, i) in drawTools" :key="i">
          <i v-if="t.sep" class="sep"></i>
          <button v-else :class="['tool', { on: t.on }]" :aria-label="t.icon || t.letter">
            <span class="face">
              <svg v-if="t.icon" viewBox="0 0 17 17" v-html="icons[t.icon]"></svg>
              <b v-else>{{ t.letter }}</b>
            </span>
          </button>
          <button v-if="t.menu" class="drop" aria-label="more"></button>
        </template>
      </div>
      <div class="toolbar">
        <i class="grip"></i>
        <button v-for="p in periods" :key="p" :class="['tool', { on: p === period }]" @click="period = p">
          <span class="face period">{{ p }}</span>
        </button>
      </div>
    </div>

    <main class="body">
      <aside class="side">
        <section class="panel quotes">
          <div class="panel-head">
            <h2>市场报价: 16:24:53</h2>
            <button aria-label="Close">×</button>
          </div>
          <div class="panel-body">
            <table>
              <thead>
                <tr>
                  <th>交易品种</th>
                  <th>卖价</th>
                  <th>买价</th>
                </tr>
              </thead>
              <tbody>
                <tr v-for="([name, bid, ask, dir], i) in quotes" :key="i" :class="dir">
                  <td>
                    <svg viewBox="0 0 10 10" width="10" height="10">
                      <path
                        v-if="dir === 'up'"
                        d="M5 .5L9.500 5H7v4H3V5H.5z"
                        fill="#3fc04a"
                        stroke="#0f7a1c"
                      />
                      <path v-else d="M5 9.500L9.500 5H7V1H3v4H.5z" fill="#f0602c" stroke="#a8340c" />
                    </svg>
                    {{ name }}
                  </td>
                  <td>{{ bid }}</td>
                  <td>{{ ask }}</td>
                </tr>
              </tbody>
            </table>
            <div class="scroll">
              <svg viewBox="0 0 10 6"><path d="M1 5l4-4 4 4" /></svg>
              <i></i>
              <svg viewBox="0 0 10 6"><path d="M1 1l4 4 4-4" /></svg>
            </div>
          </div>
          <div class="tabs">
            <button class="current">交易品种</button>
            <button>即时图</button>
          </div>
        </section>

        <section class="panel navigator">
          <div class="panel-head">
            <h2>导航</h2>
            <button aria-label="Close">×</button>
          </div>
          <div class="panel-body tree">
            <p><svg viewBox="0 0 16 16" v-html="icons.chartWin"></svg>GOLDAY MT4</p>
            <ul>
              <li v-for="n in tree" :key="n.text">
                <button v-if="n.open" class="expand" aria-label="Expand">
                  <svg viewBox="0 0 9 9"><path d="M2 4.500h5M4.500 2v5" /></svg>
                </button>
                <svg class="node" viewBox="0 0 17 17" v-html="icons[n.icon]"></svg>{{ n.text }}
              </li>
            </ul>
          </div>
          <div class="tabs">
            <button class="current">常用</button>
            <button>收藏夹</button>
          </div>
        </section>
      </aside>

      <div class="workspace">
        <article v-for="c in charts" :key="c.title" :class="['window', { active: c.active }]">
          <header>
            <svg viewBox="0 0 16 16" v-html="icons.chartWin"></svg>
            <h3>{{ c.title }}</h3>
            <button aria-label="Minimize">
              <svg viewBox="0 0 13 11"><rect x="1.500" y="5.500" width="10" height="3" rx=".5" /></svg>
            </button>
            <button aria-label="Maximize">
              <svg viewBox="0 0 13 11"><path d="M1.500 1.500h10v8h-10zM4.500 4.500v2h4v-2z" /></svg>
            </button>
            <button class="close" aria-label="Close">
              <svg viewBox="0 0 13 11">
                <path d="M1.500 1.500h3l2 2.200 2-2.200h3L8.300 5.500l3.200 4h-3l-2-2.200-2 2.200h-3l3.200-4z" />
              </svg>
            </button>
          </header>

          <div class="canvas">
            <svg class="plot">
              <g class="grid">
                <line v-for="k in 25" :key="'v' + k" :x1="k * 32 + 0.5" :x2="k * 32 + 0.5" y1="0" y2="100%" />
                <line v-for="s in c.scale" :key="s.text" x1="1" x2="100%" :y1="s.y + 0.5" :y2="s.y + 0.5" />
                <line v-if="c.sub" x1="1" x2="100%" :y1="c.sub.zero + 0.5" :y2="c.sub.zero + 0.5" />
              </g>
              <line class="last" x1="0" x2="100%" :y1="c.last.y + 0.5" :y2="c.last.y + 0.5" />
              <path class="wick" :d="c.wick" />
              <path class="solid" :d="c.solid" />
              <polyline v-if="c.ma" class="ma" :points="c.ma" />
              <text x="4" y="11">{{ c.info }}</text>
              <template v-if="c.sub">
                <line
                  v-for="y in c.sub.levels"
                  :key="y"
                  class="level"
                  x1="1"
                  x2="100%"
                  :y1="y + 0.5"
                  :y2="y + 0.5"
                />
                <path v-if="c.sub.hist" class="hist" :d="c.sub.hist" />
                <polyline v-if="c.sub.signal" class="ma signal" :points="c.sub.signal" />
                <polyline v-if="c.sub.line" class="cci" :points="c.sub.line" />
                <text x="4" y="223">{{ c.sub.info }}</text>
                <rect class="gap" x="0" y="208" width="100%" height="3" />
                <path class="gap-line" d="M0 208.500h4000M0 210.500h4000" />
              </template>
            </svg>
            <svg class="axis">
              <template v-for="s in c.scale" :key="s.text">
                <path :d="`M0 ${s.y + 1.5}h2`" />
                <text x="5" :y="s.y + 5">{{ s.text }}</text>
              </template>
              <template v-if="c.sub">
                <text v-for="s in c.sub.scale" :key="s.text" x="3" :y="s.y + 5">{{ s.text }}</text>
                <path :d="`M0 212.500h2M0 ${c.sub.zero + 1.5}h2M0 311.500h2`" />
              </template>
              <rect x="1" :y="c.last.y - 4" :width="c.last.width" height="11" fill="#fff" />
              <text class="now" x="5" :y="c.last.y + 5">{{ c.last.text }}</text>
            </svg>
            <svg class="dates">
              <g v-for="(d, i) in c.dates" :key="d">
                <path :d="`M${i * 64 + 1.5} 0v3`" />
                <text :x="i * 64" y="12">{{ d }}</text>
              </g>
            </svg>
          </div>
        </article>
        <div class="strip"></div>
      </div>
    </main>

    <div class="meter">
      <div class="rates">
        <p><span class="up">🡑</span>12<small>K/s</small></p>
        <p><span class="down">🡓</span>2.2<small>M/s</small></p>
      </div>
      <div class="load">
        <svg viewBox="0 0 58 58">
          <defs>
            <linearGradient id="ring" x1="0" y1="1" x2="1" y2="0">
              <stop offset="0" stop-color="#f0b040" />
              <stop offset=".4" stop-color="#d8dc50" />
              <stop offset="1" stop-color="#2cc8b8" />
            </linearGradient>
          </defs>
          <path d="M29 4a25 25 0 1 1-25 19" fill="none" stroke="url(#ring)" stroke-width="1.500" />
        </svg>
        <span>79<small>%</small></span>
      </div>
    </div>
  </div>
</template>

<style>
body {
  overflow: hidden;
}
</style>

<style scoped>
.app {
  height: 100vh;
  display: flex;
  flex-direction: column;
  overflow: hidden;
  background: #f0f0f0;
  color: #000;
  font: 12px/16px 'Open Sans', 'Noto Sans CJK SC', sans-serif;
}

h1,
h2,
h3,
p,
ul {
  margin: 0;
  padding: 0;
  font-size: 12px;
  font-weight: normal;
}

button {
  margin: 0;
  padding: 0;
  border: 0;
  background: none;
  color: inherit;
  font: inherit;
}

svg {
  display: block;
  flex: none;
}

/* title and menu */
.titlebar {
  display: flex;
  align-items: center;
  height: 22px;
  background: #fff;
}

.logo {
  width: 16px;
  height: 16px;
}

.titlebar h1 {
  flex: 1;
  margin-left: 5px;
}

.sys {
  width: 46px;
  height: 20px;
  display: flex;
  align-items: center;
  justify-content: center;
}

.sys svg {
  width: 10px;
  height: 10px;
  fill: none;
  stroke: #000;
}

.menubar {
  display: flex;
  gap: 19px;
  height: 20px;
  padding-left: 5px;
  border-bottom: 1px solid #a0a0a0;
}

.menubar button {
  height: 20px;
}

/* toolbars */
.toolrow {
  display: flex;
  height: 25px;
  border-top: 1px solid #fff;
  border-bottom: 1px solid #a0a0a0;
}

.toolbar {
  display: flex;
  align-items: center;
  height: 25px;
  border-right: 1px solid #a0a0a0;
}

.toolbar + .toolbar {
  padding-left: 3px;
}

.grip {
  width: 3px;
  height: 20px;
  margin-right: 1px;
  background: repeating-linear-gradient(#a0a0a0 0 1px, transparent 1px 2px);
}

.sep {
  width: 1px;
  height: 20px;
  margin: 0 2px 0 3px;
  background: #a0a0a0;
}

.tool {
  display: flex;
  align-items: center;
  width: 28px;
  height: 24px;
}

.face {
  display: flex;
  align-items: center;
  justify-content: center;
  box-sizing: border-box;
  flex: none;
  width: 25px;
  height: 23px;
  margin-left: 1px;
  border: 1px solid transparent;
}

.face svg {
  width: 17px;
  height: 17px;
}

.face b {
  color: #555;
  font: bold 12px/16px 'Liberation Sans', sans-serif;
}

.on .face {
  border-color: #a0a0a0 #fff #fff #a0a0a0;
  background: #f7f7f7;
}

.wide {
  width: auto;
  padding-right: 6px;
}

.wide:last-child {
  padding-right: 8px;
}

.caption {
  white-space: nowrap;
}

.off {
  color: #a0a0a0;
}

.period {
  color: #444;
  font: 9px/12px 'DejaVu Sans', sans-serif;
}

.drop {
  width: 11px;
  height: 20px;
  display: flex;
  align-items: center;
}

.drop::before {
  content: '';
  margin-left: 1px;
  border: 3px solid transparent;
  border-top-color: #000;
  border-bottom: 0;
}

.extras {
  display: flex;
  align-items: center;
  gap: 8px;
  margin-left: auto;
  padding-right: 5px;
}

/* left column */
.body {
  flex: 1;
  display: flex;
  min-height: 0;
  border-top: 1px solid #696969;
}

.side {
  flex: none;
  width: 181px;
  display: flex;
  flex-direction: column;
  padding: 1px 5px 0 0;
  border-right: 1px solid #696969;
  overflow: hidden;
}

.panel {
  display: flex;
  flex: none;
  flex-direction: column;
}

.quotes {
  height: 389px;
  border-bottom: 1px solid #a0a0a0;
}

.navigator {
  height: 388px;
  padding-top: 2px;
}

.panel-head {
  display: flex;
  align-items: center;
  height: 14px;
  flex: none;
  padding-left: 1px;
}

.panel-head h2 {
  flex: 1;
  padding-left: 3px;
  line-height: 14px;
  background: linear-gradient(90deg, #bfcddb, #d7e4f2);
}

.panel-head button {
  width: 12px;
  font: bold 13px/14px 'Liberation Sans', sans-serif;
}

.panel-body {
  display: flex;
  flex: 1;
  min-height: 0;
  overflow: hidden;
  margin-left: 1px;
  border: 1px solid #a0a0a0;
  border-width: 1px 0 0 1px;
  background: #fff;
}

table {
  width: 162px;
  height: max-content;
  table-layout: fixed;
  border-spacing: 0;
}

th {
  box-sizing: border-box;
  height: 24px;
  padding: 0 6px 0 0;
  border-right: 1px solid #d8d8d8;
  border-bottom: 1px solid #c8c8c8;
  font-weight: normal;
  text-align: right;
}

th:first-child {
  width: 69px;
  padding-left: 5px;
  text-align: left;
}

th:nth-child(2) {
  width: 46px;
}

td {
  box-sizing: border-box;
  height: 21px;
  padding: 0 3px 0 0;
  border-right: 1px solid #c8c8c8;
  border-bottom: 1px solid #c8c8c8;
  text-align: right;
}

td:first-child {
  display: flex;
  align-items: center;
  gap: 6px;
  padding-left: 4px;
}

.up td {
  color: #00f;
}

.down td {
  color: #f00;
}

tr td:first-child {
  color: #000;
}

.scroll {
  width: 16px;
  display: flex;
  flex-direction: column;
  align-items: center;
  padding: 6px 0;
  background: #f0f0f0;
}

.scroll svg {
  width: 10px;
  height: 6px;
  fill: none;
  stroke: #555;
  stroke-width: 2;
}

.scroll i {
  width: 15px;
  height: 130px;
  margin: 4px 0 auto;
  background: #cdcdcd;
}

.tabs {
  display: flex;
  height: 26px;
  flex: none;
  margin-left: 1px;
  border-top: 1px solid #000;
}

.tabs button {
  height: 21px;
  padding: 0 10px;
  color: #808080;
}

.tabs button:last-child {
  height: 16px;
  margin-top: 3px;
  border-right: 1px solid #808080;
}

.tabs .current {
  margin: -1px 0 0 2px;
  padding: 0 9px;
  border: 1px solid #000;
  border-top: 0;
  background: #fff;
  color: #000;
}

.tree {
  flex-direction: column;
}

.tree p {
  display: flex;
  align-items: center;
  gap: 6px;
  height: 20px;
  margin-top: 1px;
  padding-left: 5px;
}

.tree p svg {
  width: 16px;
  height: 16px;
}

.tree ul {
  margin-left: 13px;
  list-style: none;
}

.tree li {
  position: relative;
  display: flex;
  align-items: center;
  height: 20px;
  padding-left: 12px;
}

.tree li::before {
  content: '';
  position: absolute;
  left: 0;
  top: 0;
  width: 10px;
  height: 10px;
  border-left: 1px dotted #808080;
  border-bottom: 1px dotted #808080;
}

.tree li:not(:last-child)::after {
  content: '';
  position: absolute;
  left: 0;
  top: 10px;
  height: 10px;
  border-left: 1px dotted #808080;
}

.node {
  width: 17px;
  height: 17px;
  margin-right: 6px;
}

.expand {
  position: absolute;
  z-index: 1;
  left: -4px;
  top: 6px;
  width: 9px;
  height: 9px;
  box-sizing: border-box;
  border: 1px solid #919191;
  background: #fff;
}

.expand svg {
  width: 7px;
  height: 7px;
  stroke: #1c2d80;
}

/* chart windows */
.workspace {
  flex: 1;
  display: grid;
  grid-template-columns: 1fr 1fr;
  align-content: start;
  padding-right: 2px;
  background: #a0a0a0;
  overflow: hidden;
}

.strip {
  grid-column: 1 / 3;
  height: 3px;
  background: linear-gradient(90deg, #000 5px, #fff 5px 95px, #000 95px) 0 2px no-repeat #f0f0f0;
}

.window {
  min-width: 0;
  box-sizing: border-box;
  padding: 0 7px 7px;
  border: 1px solid #4a4a4e;
  border-radius: 5px 5px 0 0;
  background: linear-gradient(#bfcddb, #d7e4f2 30px);
  box-shadow: inset 1px 1px #fff;
}

.window.active {
  border-color: #000;
  background: linear-gradient(#99b4d1 0, #b9d1ea 30px, #dbe8f6 120px, #b9d1ea 121px);
  box-shadow: inset 1px 1px #fff, inset -1px -1px #3ac8e8;
}

.window header {
  display: flex;
  align-items: center;
  gap: 2px;
  height: 30px;
  padding: 6px 3px 0 2px;
  box-sizing: border-box;
  color: #999;
}

.window.active header {
  color: #000;
}

.window header > svg {
  width: 16px;
  height: 16px;
}

.window h3 {
  flex: 1;
  margin-left: 2px;
}

.window header button {
  display: flex;
  align-items: center;
  justify-content: center;
  box-sizing: border-box;
  width: 32px;
  height: 18px;
  border: 1px solid #8494b0;
  border-radius: 2px;
  background: #c6d4e3;
}

.window header button svg {
  width: 13px;
  height: 11px;
  fill: #f4f4f4;
  fill-rule: evenodd;
  stroke: #555b66;
}

.window.active header button {
  border-color: #5f7391;
  background: linear-gradient(#c5d7ea 50%, #a5bdd8 50%, #bdd2e9);
  box-shadow: inset 0 0 0 1px #dbe7f3;
}

.window.active header .close {
  border-color: #431422;
  background: linear-gradient(#dfa096 45%, #b83c28 50%, #d07058);
  box-shadow: inset 0 0 0 1px #e8b0a4;
}

.canvas {
  display: grid;
  grid-template-columns: 1fr 39px;
  padding: 2px 0 0 2px;
  border: 2px solid;
  border-color: #8a8a8a #f4f4f4 #f4f4f4 #8a8a8a;
  background: #000;
  overflow: hidden;
}

.canvas svg {
  shape-rendering: crispEdges;
  fill: none;
  stroke: #fff;
}

.canvas text {
  fill: #fff;
  stroke: none;
  white-space: pre;
  font: 9px 'DejaVu Sans Condensed', 'DejaVu Sans', sans-serif;
}

.canvas .plot {
  box-sizing: border-box;
  width: 100%;
  height: 315px;
  border: 1px solid #fff;
}

.canvas .axis {
  width: 39px;
  height: 315px;
}

.canvas .dates {
  grid-column: 1 / 3;
  width: 100%;
  height: 20px;
}

.grid {
  stroke: #778899;
  stroke-dasharray: 3 3;
}

.last {
  stroke: #778899;
}

.wick {
  stroke: #0f0;
}

.solid {
  fill: #fff;
  stroke: #0f0;
}

.ma {
  stroke: #f00;
}

.signal {
  stroke-dasharray: 4 3;
}

.hist,
.level {
  stroke: #c0c0c0;
}

.level {
  stroke-dasharray: 3 3;
}

.cci {
  stroke: #20b2aa;
}

.gap {
  fill: #000;
  stroke: none;
}

.canvas .now {
  fill: #000;
}

/* network meter floats above the charts */
.meter {
  position: fixed;
  right: 6px;
  bottom: 141px;
  display: flex;
  align-items: center;
  color: #fff;
}

.rates {
  width: 76px;
  height: 42px;
  margin-right: -16px;
  border-radius: 21px 0 0 21px;
  background: rgba(32, 34, 46, 0.92);
}

.rates p {
  display: flex;
  align-items: baseline;
  justify-content: flex-end;
  height: 20px;
  padding-right: 20px;
  font-size: 12px;
  line-height: 21px;
}

.rates p + p {
  border-top: 1px solid #15161e;
}

.rates small {
  color: #999;
  font-size: 10px;
}

.rates span {
  margin: 0 auto 0 10px;
  font: bold 10px/20px 'DejaVu Sans', sans-serif;
}

.rates .up {
  color: #3fa4e0;
}

.rates .down {
  color: #2a9a3a;
}

.load {
  position: relative;
  width: 58px;
  height: 58px;
  border-radius: 50%;
  background: rgba(46, 50, 66, 0.95);
}

.load svg {
  width: 58px;
  height: 58px;
}

.load span {
  position: absolute;
  inset: 0;
  text-align: center;
  font: 300 24px/58px Lato, sans-serif;
}

.load small {
  font-size: 10px;
}
</style>
